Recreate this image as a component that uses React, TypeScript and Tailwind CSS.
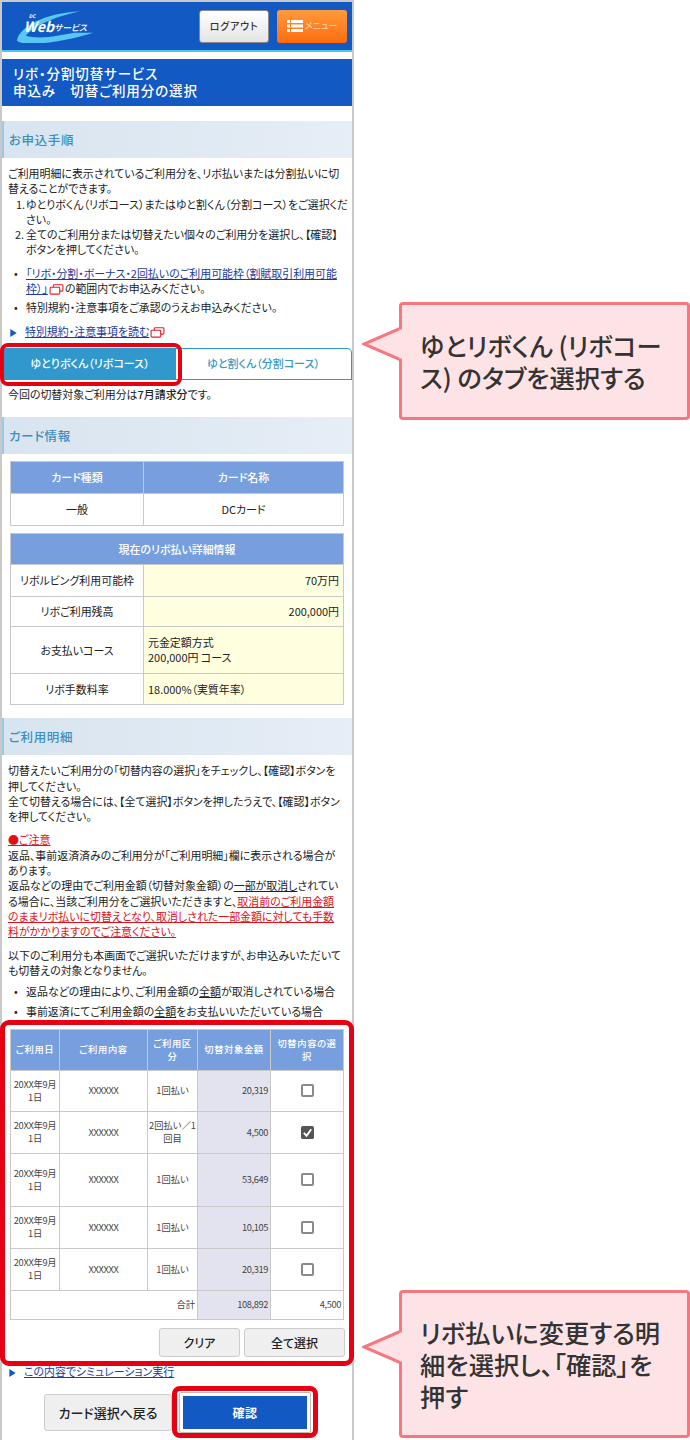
import { ReactNode } from 'react';

const FONT = "font-['Noto_Sans_CJK_JP','Noto_Sans',sans-serif] [font-feature-settings:'palt']";

function ExternalIcon() {
  return (
    <svg viewBox="0 0 16 12" className="inline-block w-[15px] h-[11px] align-[-2px] mx-[1px]" fill="#fff" stroke="#e0202a" strokeWidth="1.2">
      <rect x="4.5" y="0.8" width="10.5" height="7" rx="1" />
      <rect x="1" y="3.6" width="10.5" height="7.4" rx="1" />
    </svg>
  );
}

function Arrow() {
  return (
    <svg viewBox="0 0 8 10" className="inline-block w-[7px] h-[8px] mr-[8px]" fill="#1259c3">
      <path d="M0 0 L8 5 L0 10 Z" />
    </svg>
  );
}

function SectionHead({ children }: { children: ReactNode }) {
  return (
    <div className="h-[37px] flex items-center pl-[5px] border-l-2 border-[#9cc8e4] bg-gradient-to-r from-[#d8e4ef] to-[#e6eef6] text-[#3a8fc0] text-[12.5px] font-medium tracking-[0.6px]">
      {children}
    </div>
  );
}

function Callout({ top, children }: { top: string; children: ReactNode }) {
  return (
    <div className={`relative ${top} ml-[45px] w-[291px] bg-[#fde3e5] border-[3px] border-[#f5777f] rounded-[4px] pl-[18px] pr-[12px] flex items-center text-[25.3px] leading-[32px] font-medium text-[#333]`}>
      <svg viewBox="0 0 40 34" className="absolute left-[-40px] top-[calc(50%-34px)] w-[40px] h-[34px]">
        <path d="M39 1 L2 17 L39 33" fill="#fde3e5" stroke="#f5777f" strokeWidth="3" />
        <rect x="37.5" y="2.5" width="3" height="29" fill="#fde3e5" />
      </svg>
      <div>{children}</div>
    </div>
  );
}

const rows = [
  { h: 'h-[41px]', kind: '1回払い', amount: '20,319', checked: false },
  { h: 'h-[42px]', kind: '2回払い／1回目', amount: '4,500', checked: true },
  { h: 'h-[53px]', kind: '1回払い', amount: '53,649', checked: false },
  { h: 'h-[42px]', kind: '1回払い', amount: '10,105', checked: false },
  { h: 'h-[42px]', kind: '1回払い', amount: '20,319', checked: false },
];

function Check({ checked }: { checked: boolean }) {
  if (checked) {
    return (
      <svg viewBox="0 0 14 14" className="w-[13px] h-[13px] mx-auto">
        <rect width="14" height="14" rx="2" fill="#555" />
        <path d="M3 7.5 L6 10.5 L11 3.5" fill="none" stroke="#fff" strokeWidth="2" />
      </svg>
    );
  }
  return <div className="w-[13px] h-[13px] mx-auto rounded-[2px] border-2 border-[#8a8a8a] bg-white" />;
}

export default function App() {
  return (
    <div className={`${FONT} relative w-[690px] h-[1440px] overflow-hidden bg-white flex text-[#222]`}>
      <div className="relative w-[354px] shrink-0 h-[1440px] border-x-2 border-t-2 border-[#c9c9c9] text-[10.95px] leading-[15.3px]">
        {/* header */}
        <div className="h-[48px] bg-[#1259c3] flex items-center justify-between pl-[14px] pr-[5px]">
          <svg viewBox="0 0 80 34" className="w-[78px] h-[34px]">
            <path d="M1 32 C3 18 30 3 66 2 C42 6 16 18 10 27 C24 31 44 27 60 24 L79 24 C58 31 12 40 1 32 Z" fill="#58c8f2" />
            <text x="13" y="9" fontSize="5" fontWeight="700" fontStyle="italic" fill="#fff">DC</text>
            <text x="8" y="23" fontSize="14.5" fontStyle="italic" fontWeight="700" fill="#fff">Web</text>
            <text x="39" y="22" fontSize="9" fontStyle="italic" fontWeight="500" fill="#fff">サービス</text>
          </svg>
          <div className="flex gap-[8px]">
            <div className="w-[70px] h-[33px] rounded-[3px] border border-[#888] bg-gradient-to-b from-white to-[#e4e4e4] flex items-center justify-center text-[10px] text-[#333] tracking-[0.8px] font-medium">ログアウト</div>
            <div className="w-[70px] h-[33px] rounded-[3px] bg-gradient-to-b from-[#ff9a3a] to-[#ff6a08] flex items-center justify-center gap-[2px] text-[9px] text-[#ffd9b3]">
              <svg viewBox="0 0 16 12" className="w-[16px] h-[12px]" fill="#fff">
                <rect x="0" y="0" width="3" height="3" />
                <rect x="4" y="0" width="12" height="3" />
                <rect x="0" y="4.5" width="3" height="3" />
                <rect x="4" y="4.5" width="12" height="3" />
                <rect x="0" y="9" width="3" height="3" />
                <rect x="4" y="9" width="12" height="3" />
              </svg>
              メニュー
            </div>
          </div>
        </div>
        <div className="h-[2px] bg-[#4cc8f0]" />

        {/* title */}
        <div className="mt-[7px] h-[47px] bg-[#1259c3] px-[11px] pt-[6px] text-white text-[13.5px] leading-[17px] font-medium tracking-[0.9px]">
          <div>リボ・分割切替サービス</div>
          <div>申込み　切替ご利用分の選択</div>
        </div>

        <div className="mt-[15px]">
          <SectionHead>お申込手順</SectionHead>
        </div>

        <div className="px-[6px] pt-[8px]">
          <p>ご利用明細に表示されているご利用分を、リボ払いまたは分割払いに切替えることができます。</p>
          <ol className="pl-[18px] mr-[-4px]">
            <li className="relative"><span className="absolute left-[-10px]">1.</span>ゆとりボくん（リボコース）またはゆと割くん（分割コース）をご選択ください。</li>
            <li className="relative"><span className="absolute left-[-11px]">2.</span>全てのご利用分または切替えたい個々のご利用分を選択し、【確認】<br />ボタンを押してください。</li>
          </ol>
          <ul className="pl-[18px] mt-[8px]">
            <li className="relative"><span className="absolute left-[-12px]">•</span><span className="text-[#1a3aa0] underline">「リボ・分割・ボーナス・2回払いのご利用可能枠（割賦取引利用可能枠）」</span><ExternalIcon />の範囲内でお申込みください。</li>
            <li className="relative mt-[4px]"><span className="absolute left-[-12px]">•</span>特別規約・注意事項をご承認のうえお申込みください。</li>
          </ul>
          <div className="mt-[8px] pl-[2px]"><Arrow /><span className="text-[#1a3aa0] underline">特別規約・注意事項を読む</span><ExternalIcon /></div>
        </div>

        {/* tabs */}
        <div className="mt-[9px] flex h-[32px] pl-[2px] text-[11px] font-medium">
          <div className="w-[172px] bg-[#3098cc] text-white flex items-center justify-center">ゆとりボくん（リボコース）</div>
          <div className="flex-1 border border-l-0 border-[#3098cc] rounded-tr-[5px] text-[#3a98c8] flex items-center justify-center">ゆと割くん（分割コース）</div>
        </div>
        <div className="px-[6px] pt-[7px]">今回の切替対象ご利用分は<b className="font-medium">7月請求分</b>です。</div>

        <div className="mt-[15px]">
          <SectionHead>カード情報</SectionHead>
        </div>

        {/* card info */}
        <table className="mt-[7px] ml-[8px] w-[334px] table-fixed border-collapse text-center">
          <colgroup>
            <col className="w-[133px]" />
            <col />
          </colgroup>
          <tbody>
            <tr className="h-[32px] bg-[#789fdd] text-white font-medium">
              <td className="border border-[#c9c9c9]">カード種類</td>
              <td className="border border-[#c9c9c9]">カード名称</td>
            </tr>
            <tr className="h-[32px]">
              <td className="border border-[#c9c9c9]">一般</td>
              <td className="border border-[#c9c9c9]">DCカード</td>
            </tr>
          </tbody>
        </table>

        <table className="mt-[7px] ml-[8px] w-[334px] table-fixed border-collapse text-center">
          <colgroup>
            <col className="w-[133px]" />
            <col />
          </colgroup>
          <tbody>
            <tr className="h-[31px] bg-[#789fdd] text-white font-medium">
              <td colSpan={2} className="border border-[#c9c9c9]">現在のリボ払い詳細情報</td>
            </tr>
            <tr className="h-[32px]">
              <td className="border border-[#c9c9c9]">リボルビング利用可能枠</td>
              <td className="border border-[#c9c9c9] bg-[#ffffe0] text-right pr-[4px]">70万円</td>
            </tr>
            <tr className="h-[30px]">
              <td className="border border-[#c9c9c9]">リボご利用残高</td>
              <td className="border border-[#c9c9c9] bg-[#ffffe0] text-right pr-[4px]">200,000円</td>
            </tr>
            <tr className="h-[47px]">
              <td className="border border-[#c9c9c9]">お支払いコース</td>
              <td className="border border-[#c9c9c9] bg-[#ffffe0] text-left pl-[4px]">元金定額方式<br />200,000円 コース</td>
            </tr>
            <tr className="h-[31px]">
              <td className="border border-[#c9c9c9]">リボ手数料率</td>
              <td className="border border-[#c9c9c9] bg-[#ffffe0] text-left pl-[4px]">18.000%（実質年率）</td>
            </tr>
          </tbody>
        </table>

        <div className="mt-[13px]">
          <SectionHead>ご利用明細</SectionHead>
        </div>

        <div className="px-[6px] pt-[8px]">
          <p>切替えたいご利用分の「切替内容の選択」をチェックし、【確認】ボタンを押してください。<br />全て切替える場合には、【全て選択】ボタンを押したうえで、【確認】ボタンを押してください。</p>
          <p className="mt-[8px] text-[#e0101a] underline">●ご注意</p>
          <p className="pr-[5px]">返品、事前返済済みのご利用分が「ご利用明細」欄に表示される場合があります。<br />返品などの理由でご利用金額（切替対象金額）の<span className="underline">一部が取消し</span>されている場合に、当該ご利用分をご選択いただきますと、<span className="text-[#e0101a] underline">取消前のご利用金額のままリボ払いに切替えとなり、取消しされた一部金額に対しても手数料がかかりますのでご注意ください。</span></p>
          <p className="mt-[8px]">以下のご利用分も本画面でご選択いただけますが、お申込みいただいても切替えの対象となりません。</p>
          <ul className="pl-[18px] mt-[6px]">
            <li className="relative"><span className="absolute left-[-12px]">•</span>返品などの理由により、ご利用金額の<span className="underline">全額</span>が取消しされている場合</li>
            <li className="relative mt-[5px]"><span className="absolute left-[-12px]">•</span>事前返済にてご利用金額の<span className="underline">全額</span>をお支払いいただいている場合</li>
          </ul>
        </div>

        {/* detail table */}
        <table className="mt-[9px] ml-[8px] w-[334px] table-fixed border-collapse text-center text-[9.3px] leading-[13px] text-[#444]">
          <colgroup>
            <col className="w-[49px]" />
            <col className="w-[88px]" />
            <col className="w-[50px]" />
            <col className="w-[73px]" />
            <col />
          </colgroup>
          <tbody>
            <tr className="h-[41px] bg-[#789fdd] text-white font-medium tracking-[0.6px]">
              <td className="border border-[#c9c9c9] px-[3px]">ご利用日</td>
              <td className="border border-[#c9c9c9] px-[3px]">ご利用内容</td>
              <td className="border border-[#c9c9c9] px-[3px]">ご利用区分</td>
              <td className="border border-[#c9c9c9] px-[3px]">切替対象金額</td>
              <td className="border border-[#c9c9c9] px-[5px]">切替内容の選択</td>
            </tr>
            {rows.map((row, i) => (
              <tr key={i} className={row.h}>
                <td className="border border-[#c9c9c9] tracking-[-0.3px]">20XX年9月<br />1日</td>
                <td className="border border-[#c9c9c9] tracking-[-0.3px]">XXXXXX</td>
                <td className="border border-[#c9c9c9] px-0">{row.kind}</td>
                <td className="border border-[#c9c9c9] bg-[#e2e3ee] text-right pr-[2px] tracking-[-0.4px]">{row.amount}</td>
                <td className="border border-[#c9c9c9]"><Check checked={row.checked} /></td>
              </tr>
            ))}
            <tr className="h-[29px]">
              <td colSpan={3} className="border border-[#c9c9c9] text-right pr-[2px]">合計</td>
              <td className="border border-[#c9c9c9] bg-[#e2e3ee] text-right pr-[2px] tracking-[-0.4px]">108,892</td>
              <td className="border border-[#c9c9c9] text-right pr-[2px] tracking-[-0.4px]">4,500</td>
            </tr>
          </tbody>
        </table>

        <div className="mt-[8px] pr-[7px] flex justify-end gap-[4px] text-[12px] font-medium">
          <div className="w-[81px] h-[29px] rounded-[3px] border border-[#ccc] bg-[#efefef] flex items-center justify-center">クリア</div>
          <div className="w-[101px] h-[29px] rounded-[3px] border border-[#ccc] bg-[#efefef] flex items-center justify-center">全て選択</div>
        </div>

        <div className="mt-[7px] pl-[7px]"><Arrow /><span className="text-[#1a3aa0] underline">この内容でシミュレーション実行</span></div>

        <div className="mt-[13px] ml-[42px] flex items-center gap-[7px]">
          <div className="w-[128px] h-[37px] rounded-[3px] border border-[#ccc] bg-[#efefef] flex items-center justify-center text-[13px] font-medium">カード選択へ戻る</div>
          <div className="w-[132px] h-[41px] p-[3px] bg-white border border-[#bbb] rounded-[2px]">
            <div className="h-full bg-[#1259c3] text-white flex items-center justify-center text-[12px] font-bold tracking-[0.5px]">確認</div>
          </div>
        </div>

        {/* highlight frames */}
        <div className="absolute left-[-2px] top-[341px] w-[182px] h-[43px] border-[4px] border-[#e60012] rounded-[8px]" />
        <div className="absolute left-[-2px] top-[1018px] w-[354px] h-[346px] border-[5px] border-[#e60012] rounded-[9px]" />
        <div className="absolute left-[170px] top-[1384px] w-[146px] h-[52px] border-[5px] border-[#e60012] rounded-[8px]" />
      </div>

      <div className="flex flex-col">
        <Callout top="mt-[302px] h-[118px]">ゆとリボくん (リボコース) のタブを選択する</Callout>
        <Callout top="mt-[870px] h-[148px]">リボ払いに変更する明細を選択し、「確認」を押す</Callout>
      </div>
    </div>
  );
}
